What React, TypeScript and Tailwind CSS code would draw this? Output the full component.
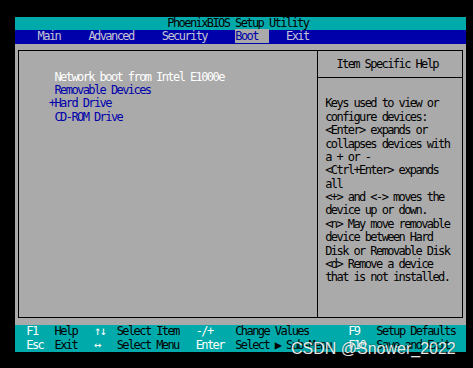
import React from 'react';

// text-mode grid: one cell is 5.64px wide and 13.4px tall (80x25 stretched to 451x335)
const pad = (n: number) => ' '.repeat(n);

type Seg = [string, string];

const bottomRows: Seg[][] = [
  [
    [pad(2), ''], ['F1', 'text-white'], [pad(3), ''], ['Help', 'text-black'], [pad(3), ''],
    ['↑↓', 'text-white'], [pad(2), ''], ['Select Item', 'text-black'], [pad(3), ''],
    ['-/+', 'text-white'], [pad(4), ''], ['Change Values', 'text-black'], [pad(7), ''],
    ['F9', 'text-white'], [pad(3), ''], ['Setup Defaults', 'text-black'],
  ],
  [
    [pad(2), ''], ['Esc', 'text-white'], [pad(2), ''], ['Exit', 'text-black'], [pad(3), ''],
    ['↔', 'text-white'], [pad(3), ''], ['Select Menu', 'text-black'], [pad(3), ''],
    ['Enter', 'text-white'], [pad(2), ''], ['Select ▶ Sub-Menu', 'text-black'], [pad(3), ''],
    ['F10', 'text-white'], [pad(2), ''], ['Save and Exit', 'text-black'],
  ],
];

const bootItems = [
  { text: ' Network boot from Intel E1000e', selected: true },
  { text: ' Removable Devices', selected: false },
  { text: '+Hard Drive', selected: false },
  { text: ' CD-ROM Drive', selected: false },
];

const helpLines = [
  'Keys used to view or',
  'configure devices:',
  '<Enter> expands or',
  'collapses devices with',
  'a + or -',
  '<Ctrl+Enter> expands',
  'all',
  '<+> and <-> moves the',
  'device up or down.',
  '<n> May move removable',
  'device between Hard',
  'Disk or Removable Disk',
  '<d> Remove a device',
  'that is not installed.',
];

function Line({ children, className = '' }: { children: React.ReactNode; className?: string }) {
  return <div className={`h-[13.4px] leading-[13.4px] whitespace-pre ${className}`}>{children}</div>;
}

export default function App() {
  return (
    <div className="relative w-[473px] h-[368px] bg-black pt-[17px] pl-[15px] overflow-hidden">
      <div className="w-[451px] h-[335px] flex flex-col text-[12px] tracking-[-1.58px] font-['DejaVu_Sans_Mono','Liberation_Mono',monospace]">
        {/* title */}
        <Line className="bg-[#00aaaa] text-black pl-[152.3px]">PhoenixBIOS Setup Utility</Line>

        {/* menu bar */}
        <Line className="bg-[#0000aa] text-[#c4c4d4]">
          {pad(4)}Main{pad(5)}Advanced{pad(5)}Security{pad(5)}
          <span className="bg-[#aaaaaa] text-[#0000aa]">Boot{pad(2)}</span>
          {pad(3)}Exit
        </Line>

        {/* main panel */}
        <div className="h-[281.4px] bg-[#aaaaaa] px-[2.82px] py-[6.7px]">
          <div className="w-[445.6px] h-[268px] border border-black flex">
            <div className="w-[297.9px] flex-none pt-[19.1px] pl-[30px]">
              {bootItems.map((item) => (
                <Line key={item.text} className={item.selected ? 'text-white' : 'text-[#0000aa]'}>
                  {item.text}
                </Line>
              ))}
            </div>
            <div className="flex-1 border-l border-black flex flex-col">
              <div className="h-[26.8px] flex-none border-b border-black flex items-center pl-[18.7px]">
                <Line className="text-black">Item Specific Help</Line>
              </div>
              <div className="pt-[19.1px] pl-[7.5px] text-black">
                {helpLines.map((l) => (
                  <Line key={l}>{l}</Line>
                ))}
              </div>
            </div>
          </div>
        </div>

        {/* key legend */}
        <div className="h-[26.8px] bg-[#00aaaa]">
          {bottomRows.map((row, i) => (
            <Line key={i}>
              {row.map(([t, c], j) => (
                <span key={j} className={c}>
                  {t}
                </span>
              ))}
            </Line>
          ))}
        </div>
      </div>

      {/* watermark */}
      <div className="absolute left-[291px] top-[341px] leading-none text-[16px] text-white/90 font-['Liberation_Sans',Arial,sans-serif] [text-shadow:0_0_2px_rgba(0,0,0,0.6)]">
        CSDN @Snower_2022
      </div>
    </div>
  );
}
